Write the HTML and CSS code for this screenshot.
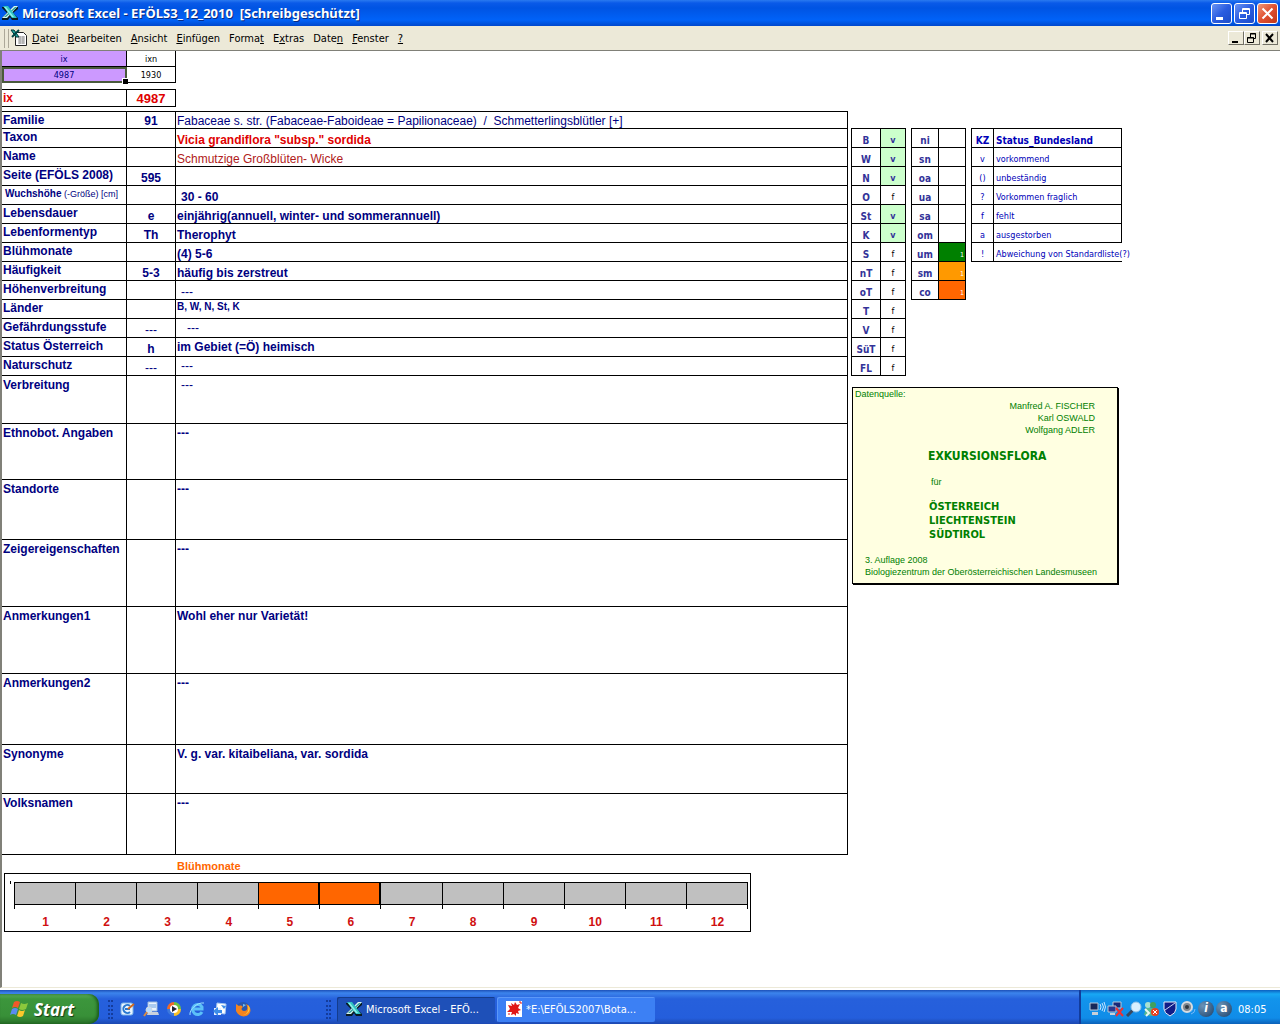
FILE: index.html
```
<!DOCTYPE html>
<html lang="de">
<head>
<meta charset="UTF-8">
<meta name="viewport" content="width=device-width, initial-scale=1.0">
<title>Microsoft Excel - EFÖLS3_12_2010</title>
<link rel="stylesheet" href="styles.css">
</head>
<body>

<!-- shared icons -->
<svg class="defs" width="0" height="0">
    <symbol id="excel" viewBox="0 0 16 16">
        <path d="M0 2h6l3 3 3-3h4v2l-5 4 5 5v2h-6l-2-3-2 3H0v-2l5-5-5-5z" fill="#0a1a20"/>
        <path d="M12 1h4L5 13H0z" fill="#d8f4f0"/>
        <path d="M13 2h2L4 12H2z" fill="#2a9c9c"/>
        <path d="M1 1h5l9 12h-5z" fill="#2fc4c4"/>
        <path d="M2 2h2l8 10h-2z" fill="#8ff0e8"/>
    </symbol>
</svg>

<header class="titlebar">
    <svg class="app-icon" width="16" height="16"><use href="#excel"/></svg>
    <h1>Microsoft Excel - EFÖLS3_12_2010&nbsp; [Schreibgeschützt]</h1>
    <div class="window-buttons">
        <button type="button" aria-label="Minimieren"><svg width="19" height="19"><path d="M4 13h7v3H4z" fill="#fff"/></svg></button>
        <button type="button" aria-label="Wiederherstellen"><svg width="19" height="19" fill="none" stroke="#fff"><path d="M7.500 8V4.500h7v6H12M7 5.500h8M4.500 8.500h7v6h-7zM4 9.500h8"/></svg></button>
        <button type="button" class="close" aria-label="Schließen"><svg width="19" height="19"><path d="M4.500 4.500l10 10M14.500 4.500l-10 10" stroke="#fff" stroke-width="2"/></svg></button>
    </div>
</header>

<nav class="menubar">
    <span class="grip"></span>
    <svg class="doc-icon" width="18" height="18">
        <path d="M5.500 3.500h8l3 3v10h-11z" fill="#fff" stroke="#222"/>
        <path d="M8 8h7M8 10h7M8 12h7M8 14h7M10 7v8M13 7v8" stroke="#999"/>
        <path d="M1 1h3l5 7H6z" fill="#1fa8a0" stroke="#033"/>
        <path d="M9 1L2 8" stroke="#044" stroke-width="2"/>
    </svg>
    <button type="button"><u>D</u>atei</button>
    <button type="button"><u>B</u>earbeiten</button>
    <button type="button"><u>A</u>nsicht</button>
    <button type="button"><u>E</u>infügen</button>
    <button type="button">Forma<u>t</u></button>
    <button type="button">E<u>x</u>tras</button>
    <button type="button">Date<u>n</u></button>
    <button type="button"><u>F</u>enster</button>
    <button type="button"><u>?</u></button>
    <div class="doc-buttons">
        <button type="button" aria-label="Mappe minimieren"><svg width="13" height="12"><path d="M3 9h6v2H3z"/></svg></button>
        <button type="button" aria-label="Mappe wiederherstellen"><svg width="13" height="12" fill="none" stroke="#000"><path d="M5.500 5V1.500h5v5H9M5 2h6M2.500 5.500h6v5h-6zM2 6h7"/></svg></button>
        <button type="button" class="doc-close" aria-label="Mappe schließen"><svg width="13" height="12"><path d="M3 2l7 8M10 2l-7 8" stroke="#000" stroke-width="2"/></svg></button>
    </div>
</nav>

<main class="sheet">
    <section class="record">
        <table class="index">
            <tr><td class="key">ix</td><td>ixn</td></tr>
            <tr><td class="key selected">4987</td><td>1930</td></tr>
        </table>

        <table class="current">
            <tr><th>ix</th><td>4987</td></tr>
        </table>

        <table class="fields">
            <tr class="first"><th>Familie</th><td>91</td><td class="plain">Fabaceae s. str. (Fabaceae-Faboideae = Papilionaceae)&nbsp; /&nbsp; Schmetterlingsblütler [+]</td></tr>
            <tr><th>Taxon</th><td></td><td class="taxon">Vicia grandiflora "subsp." sordida</td></tr>
            <tr><th>Name</th><td></td><td class="name">Schmutzige Großblüten- Wicke</td></tr>
            <tr><th>Seite (EFÖLS 2008)</th><td>595</td><td></td></tr>
            <tr><th class="small"><b>Wuchshöhe</b> (-Größe) [cm]</th><td></td><td class="indent">30 - 60</td></tr>
            <tr><th>Lebensdauer</th><td>e</td><td>einjährig(annuell, winter- und sommerannuell)</td></tr>
            <tr><th>Lebenformentyp</th><td>Th</td><td>Therophyt</td></tr>
            <tr><th>Blühmonate</th><td></td><td>(4) 5-6</td></tr>
            <tr><th>Häufigkeit</th><td>5-3</td><td>häufig bis zerstreut</td></tr>
            <tr><th>Höhenverbreitung</th><td></td><td class="indent plain">---</td></tr>
            <tr><th>Länder</th><td></td><td class="states-list">B, W, N, St, K</td></tr>
            <tr><th>Gefährdungsstufe</th><td class="plain">---</td><td class="indent-more plain middle">---</td></tr>
            <tr><th>Status Österreich</th><td>h</td><td class="middle">im Gebiet (=Ö) heimisch</td></tr>
            <tr><th>Naturschutz</th><td class="plain">---</td><td class="indent plain middle">---</td></tr>
            <tr class="tall verbreitung"><th>Verbreitung</th><td></td><td class="indent plain">---</td></tr>
            <tr class="tall ethnobotanik"><th>Ethnobot. Angaben</th><td></td><td>---</td></tr>
            <tr class="tall standorte"><th>Standorte</th><td></td><td>---</td></tr>
            <tr class="tall anmerkung"><th>Zeigereigenschaften</th><td></td><td>---</td></tr>
            <tr class="tall anmerkung"><th>Anmerkungen1</th><td></td><td>Wohl eher nur Varietät!</td></tr>
            <tr class="tall anmerkung2"><th>Anmerkungen2</th><td></td><td>---</td></tr>
            <tr class="tall synonyme"><th>Synonyme</th><td></td><td>V. g. var. kitaibeliana, var. sordida</td></tr>
            <tr class="tall volksnamen"><th>Volksnamen</th><td></td><td>---</td></tr>
        </table>

        <h2>Blühmonate</h2>
        <div class="chart">
            <ol>
                <li><div class="tick"><div class="bar"></div></div>1</li>
                <li><div class="tick"><div class="bar"></div></div>2</li>
                <li><div class="tick"><div class="bar"></div></div>3</li>
                <li><div class="tick"><div class="bar"></div></div>4</li>
                <li class="bloom"><div class="tick"><div class="bar"></div></div>5</li>
                <li class="bloom"><div class="tick"><div class="bar"></div></div>6</li>
                <li><div class="tick"><div class="bar"></div></div>7</li>
                <li><div class="tick"><div class="bar"></div></div>8</li>
                <li><div class="tick"><div class="bar"></div></div>9</li>
                <li><div class="tick"><div class="bar"></div></div>10</li>
                <li><div class="tick"><div class="bar"></div></div>11</li>
                <li><div class="tick"><div class="bar"></div></div>12</li>
            </ol>
        </div>
    </section>

    <aside>
        <div class="lists">
            <table class="states">
                <tr><th>B</th><td class="present">v</td></tr>
                <tr><th>W</th><td class="present">v</td></tr>
                <tr><th>N</th><td class="present">v</td></tr>
                <tr><th>O</th><td>f</td></tr>
                <tr><th>St</th><td class="present">v</td></tr>
                <tr><th>K</th><td class="present">v</td></tr>
                <tr><th>S</th><td>f</td></tr>
                <tr><th>nT</th><td>f</td></tr>
                <tr><th>oT</th><td>f</td></tr>
                <tr><th>T</th><td>f</td></tr>
                <tr><th>V</th><td>f</td></tr>
                <tr><th>SüT</th><td>f</td></tr>
                <tr><th>FL</th><td>f</td></tr>
            </table>

            <table class="levels">
                <tr><th>ni</th><td></td></tr>
                <tr><th>sn</th><td></td></tr>
                <tr><th>oa</th><td></td></tr>
                <tr><th>ua</th><td></td></tr>
                <tr><th>sa</th><td></td></tr>
                <tr><th>om</th><td></td></tr>
                <tr><th>um</th><td class="um">1</td></tr>
                <tr><th>sm</th><td class="sm">1</td></tr>
                <tr><th>co</th><td class="co">1</td></tr>
            </table>

            <table class="legend">
                <tr><th>KZ</th><th>Status_Bundesland</th></tr>
                <tr><td>v</td><td>vorkommend</td></tr>
                <tr><td>()</td><td>unbeständig</td></tr>
                <tr><td>?</td><td>Vorkommen fraglich</td></tr>
                <tr><td>f</td><td>fehlt</td></tr>
                <tr><td>a</td><td>ausgestorben</td></tr>
                <tr><td>!</td><td class="open">Abweichung von Standardliste(?)</td></tr>
            </table>
        </div>

        <div class="source">
            <p>Datenquelle:</p>
            <p class="authors">Manfred A. FISCHER<br>Karl OSWALD<br>Wolfgang ADLER</p>
            <div class="book">
                <h3>EXKURSIONSFLORA</h3>
                <p>für</p>
                <h4>ÖSTERREICH<br>LIECHTENSTEIN<br>SÜDTIROL</h4>
            </div>
            <p class="edition">3. Auflage 2008<br>Biologiezentrum der Oberösterreichischen Landesmuseen</p>
        </div>
    </aside>
</main>

<footer class="taskbar">
    <button type="button" class="start">
        <svg width="20" height="20">
            <path d="M4 3q3-2 6 0L8 9Q5 7 2 9z" fill="#f0582a"/>
            <path d="M11 4q3 2 7 0l-2 6q-4 2-7 0z" fill="#8cc83c"/>
            <path d="M2 10q3-2 6 0l-2 6q-3-2-6 0z" fill="#5a8cf0"/>
            <path d="M9 11q3 2 6 0l-2 6q-3 2-6 0z" fill="#fbc82c"/>
        </svg>
        Start
    </button>
    <div class="quicklaunch">
        <span class="handle"></span>
        <svg width="16" height="16">
            <rect x="1" y="2" width="12" height="12" rx="2" fill="#e8f4ff" stroke="#7ab4e8"/>
            <path d="M10 5a4 4 0 1 0 0 6M5 8h5" fill="none" stroke="#2878d0" stroke-width="2"/>
            <path d="M8 8l6-5" stroke="#d06a20" stroke-width="2"/>
        </svg>
        <svg width="16" height="16">
            <path d="M5 1h9v9H5z" fill="#eaf4ff" stroke="#9ab8dc"/>
            <path d="M6 4h7M6 6h7" stroke="#68a0e0"/>
            <path d="M5 11h10l1 3H4z" fill="#c8d0dc"/>
            <circle cx="6" cy="9" r="3" fill="#b8dcff" stroke="#d0d8e0"/>
            <path d="M4 11l-3 4" stroke="#d88a40" stroke-width="2"/>
        </svg>
        <svg width="16" height="16">
            <circle cx="8" cy="8" r="7" fill="#3c78dc"/>
            <path d="M8 8V1a7 7 0 0 0-7 7z" fill="#f06828"/>
            <path d="M8 8V1a7 7 0 0 1 7 7z" fill="#6cc040"/>
            <path d="M8 8h7a7 7 0 0 1-7 7z" fill="#f8c028"/>
            <circle cx="8" cy="8" r="4" fill="#fff"/>
            <path d="M6 5l5 3-5 3z" fill="#223"/>
        </svg>
        <svg width="16" height="16" fill="none">
            <path d="M13 11a5 5 0 1 1 0-5v2H4" stroke="#5cc0f8" stroke-width="3"/>
            <path d="M1 14C0 9 8 1 15 2" stroke="#9ae0ff" stroke-width="1"/>
        </svg>
        <svg width="16" height="16">
            <path d="M5 2l9 1-1 10-9-1z" fill="#fff" stroke="#a8c8f0"/>
            <path d="M2 7h7v7H2z" fill="#e8f0ff"/>
            <path d="M1 10l5-4v3h4v3H6v3zM9 4l5 1-2 3z" fill="#3c8ce8"/>
        </svg>
        <svg width="16" height="16">
            <circle cx="8" cy="8" r="7" fill="#2858b0"/>
            <path d="M1 3l3 2c2-1 3 0 4 1-2 1-2 4 1 4 4 0 4-4 2-7 5 2 6 8 2 11-4 3-10 1-12-4z" fill="#f48420"/>
            <path d="M13 4c4 4 0 10-5 10 5-1 6-5 5-10z" fill="#ffd040"/>
            <path d="M8 3l3 1-3 2z" fill="#7ac0f0"/>
        </svg>
    </div>
    <div class="tasks">
        <span class="handle"></span>
        <button type="button" class="active"><svg width="16" height="16"><use href="#excel"/></svg>Microsoft Excel - EFÖ...</button>
        <button type="button">
            <svg width="16" height="16">
                <path d="M0 0h16v16H0z" fill="#fff"/>
                <path d="M2 4l4 1-1-3 3 2 1-3 2 3 3-1-2 4 3 2-3 1 1 3-3-1v3l-2-2-3 1 1-3-5 0 3-3z" fill="#e01818"/>
                <path d="M13 1h2v2M2 13h2" stroke="#e01818" fill="none"/>
            </svg>*E:\EFÖLS2007\Bota...</button>
    </div>
    <div class="tray">
        <svg width="18" height="16">
            <path d="M1 2h8v7H1z" fill="#182858" stroke="#b8c8d8"/>
            <path d="M3 11h6v3H3z" fill="#c8d0d8"/>
            <path d="M11 3q2 3 0 6M13 2q3 4 0 8M15 1q3 5 0 10" fill="none" stroke="#c8e4ff"/>
        </svg>
        <svg width="18" height="16">
            <path d="M6 1h8v6H6z" fill="#182878" stroke="#b8c8d8"/>
            <path d="M1 5h8v6H1z" fill="#283890" stroke="#b8c8d8"/>
            <path d="M3 12h5v2H3z" fill="#c8d0d8"/>
            <path d="M9 7l7 8M16 7l-7 8" stroke="#f03030" stroke-width="2"/>
        </svg>
        <svg width="18" height="16">
            <path d="M8 9l-6 6" stroke="#384860" stroke-width="3"/>
            <circle cx="11" cy="6" r="5" fill="#d8f0ff" stroke="#8ac0e8"/>
        </svg>
        <svg width="18" height="16">
            <circle cx="5" cy="4" r="3" fill="#a8e0d0"/>
            <circle cx="10" cy="4" r="3" fill="#40a060"/>
            <path d="M1 14l2-7h5l6 1-3 7z" fill="#58b890"/>
            <path d="M2 8l4 4-3 3" stroke="#e8f8f0" fill="none" stroke-width="2"/>
            <circle cx="12" cy="11" r="4" fill="#e84020"/>
            <path d="M10 9l4 4M14 9l-4 4" stroke="#fff"/>
        </svg>
        <svg width="18" height="16">
            <path d="M3 1h12v7q0 4-6 7-6-3-6-7z" fill="#101c88" stroke="#e8eef8"/>
            <path d="M4 9L14 2" stroke="#c8d4f0"/>
        </svg>
        <svg width="18" height="16">
            <circle cx="8" cy="6" r="5" fill="#808890" stroke="#d8dce0" stroke-width="2"/>
            <circle cx="8" cy="6" r="2" fill="#303840"/>
            <path d="M12 13q4-1 4-5M11 11q2-1 3-3" fill="none" stroke="#78b8f8"/>
        </svg>
        <span class="badge info">i</span>
        <span class="badge">a</span>
        <time>08:05</time>
    </div>
</footer>

</body>
</html>
```
FILE: styles.css
```
* {
    box-sizing: border-box;
}
body {
    margin: 0;
    min-height: 100vh;
    display: flex;
    flex-direction: column;
    background: #fff;
    font-family: "Liberation Sans", Arial, sans-serif;
    font-size: 12px;
    color: #000080;
}
h1, h2, h3, h4, p, ol {
    margin: 0;
    padding: 0;
}
button {
    margin: 0;
    padding: 0;
    border: none;
    background: none;
    font-family: "DejaVu Sans Condensed", Tahoma, sans-serif;
    font-size: 11px;
    color: #000;
}
svg {
    display: block;
    flex: none;
}
.defs {
    position: absolute;
}

/* title bar */
.titlebar {
    display: flex;
    align-items: center;
    height: 26px;
    padding: 0 2px;
    background: linear-gradient(#2a7af0, #0a5ae8 3px, #0054e3 8px, #0062f8 20px, #0048cc);
}
.titlebar h1 {
    flex: 1;
    margin-left: 4px;
    font-family: "Noto Sans", sans-serif;
    font-size: 13px;
    color: #fff;
    text-shadow: 1px 1px #0a2a80;
}
.window-buttons {
    display: flex;
    gap: 2px;
}
.window-buttons button {
    width: 21px;
    height: 21px;
    border: 1px solid #fff;
    border-radius: 3px;
    background: linear-gradient(135deg, #6a94f4, #2a5ce0 50%, #1c4cc8);
}
.window-buttons .close {
    background: linear-gradient(135deg, #f09878, #e05030 50%, #c03818);
}

/* menu bar */
.menubar {
    display: flex;
    align-items: center;
    height: 24px;
    padding: 0 2px 0 4px;
    background: #ece9d8;
}
.menubar button {
    margin-right: 9px;
}
.grip {
    width: 5px;
    height: 19px;
    border: solid #aca899;
    border-width: 0 1px;
}
.doc-icon {
    margin: 0 4px 0 1px;
}
.doc-buttons {
    display: flex;
    margin-left: auto;
}
.doc-buttons button {
    width: 16px;
    height: 14px;
    margin: 0;
    border: 1px solid;
    border-color: #fff #716f64 #716f64 #fff;
}
.doc-buttons .doc-close {
    margin-left: 2px;
}

/* sheet */
.sheet {
    flex: 1;
    display: grid;
    grid-template-columns: minmax(0, 846px) 1fr;
    margin-bottom: 2px;
    border: solid #808078;
    border-width: 1px 0 0 2px;
    border-bottom: 1px solid #ece9d8;
}
table {
    border-collapse: separate;
    border-spacing: 0;
    table-layout: fixed;
}
th, td {
    padding: 0 1px;
    border: solid #000;
    border-width: 0 1px 1px 0;
    white-space: nowrap;
}
.index, .current {
    width: 174px;
}
.index td {
    height: 16px;
    font-family: "DejaVu Sans Condensed", Tahoma, sans-serif;
    font-size: 9px;
    line-height: 14px;
    text-align: center;
    color: #000;
}
.index td:first-child, .current th {
    width: 125px;
}
.index .key {
    background: #cc99ff;
    color: #000080;
}
.index .selected {
    position: relative;
    outline: 2px solid #4a5a3c;
    outline-offset: -2px;
}
/* fill handle */
.index .selected::after {
    content: "";
    position: absolute;
    right: -2px;
    bottom: -2px;
    width: 5px;
    height: 5px;
    border: solid #fff;
    border-width: 1px 0 0 1px;
    background: #000;
}
.current {
    margin: 6px 0 4px;
    border-top: 1px solid #000;
}
.current th, .current td {
    height: 17px;
    line-height: 15px;
    text-align: center;
    font-weight: bold;
    color: #e00000;
}
.current td {
    font-size: 13px;
}
.current th {
    text-align: left;
}
.fields {
    width: 100%;
    border-top: 1px solid #000;
}
.fields th {
    width: 125px;
    text-align: left;
    vertical-align: top;
    line-height: 16px;
}
.fields th, .fields td {
    height: 19px;
}
.fields td {
    vertical-align: bottom;
    line-height: 14px;
    font-weight: bold;
}
.fields td:nth-child(2) {
    width: 49px;
    text-align: center;
}
.fields .first th, .fields .first td {
    height: 17px;
}
.fields .small {
    padding-left: 3px;
    font-size: 9px;
    font-weight: normal;
}
.fields .small b {
    font-size: 10px;
}
.fields .plain, .fields .name {
    font-weight: normal;
}
.fields .taxon {
    color: #e00000;
}
.fields .name {
    color: #b02020;
}
.fields .indent {
    padding-left: 5px;
}
.fields .indent-more {
    padding-left: 11px;
}
.fields .middle {
    vertical-align: middle;
}
.fields .states-list {
    vertical-align: top;
    font-size: 10px;
}
.fields .tall th, .fields .tall td {
    padding-top: 1px;
    vertical-align: top;
    line-height: 16px;
}
.fields .verbreitung td {
    height: 48px;
}
.fields .ethnobotanik td {
    height: 56px;
}
.fields .standorte td {
    height: 60px;
}
.fields .anmerkung td {
    height: 67px;
}
.fields .anmerkung2 td {
    height: 71px;
}
.fields .synonyme td {
    height: 49px;
}
.fields .volksnamen td {
    height: 61px;
}

/* month chart */
.record h2 {
    padding: 4px 0 0 175px;
    font-size: 11px;
    line-height: 14px;
    color: #ff6600;
}
.chart {
    position: relative;
    max-width: 747px;
    margin-left: 2px;
    padding: 8px 2px 0 9px;
    border: 1px solid #000;
}
/* stub of the value axis */
.chart::before {
    content: "";
    position: absolute;
    top: 7px;
    left: 5px;
    width: 1px;
    height: 3px;
    background: #000;
}
.chart ol {
    display: flex;
    border-left: 1px solid transparent;
    list-style: none;
}
.chart li {
    flex: 1;
    padding-bottom: 1px;
    text-align: center;
    font-weight: bold;
    line-height: 15px;
    color: #d01010;
}
.tick {
    height: 27px;
    margin-bottom: 6px;
    border-right: 1px solid #000;
}
.chart li:first-child .tick {
    margin-left: -1px;
    border-left: 1px solid #000;
}
.bar {
    height: 23px;
    border: solid #000;
    border-width: 1px 0;
    background: #c0c0c0;
}
.bloom .bar {
    border-right-width: 1px;
    background: #ff6600;
}

/* lists on the right */
aside {
    padding: 77px 0 0 3px;
}
.lists {
    display: flex;
    align-items: flex-start;
    gap: 5px;
}
.lists table {
    flex: none;
    border: solid #000;
    border-width: 1px 0 0 1px;
}
.lists th, .lists td {
    height: 19px;
    vertical-align: bottom;
    text-align: center;
    line-height: 13px;
    font-family: "DejaVu Sans Condensed", Tahoma, sans-serif;
    font-size: 9px;
}
.lists th {
    font-size: 10px;
    color: #333399;
}
.states {
    width: 55px;
}
.states th {
    width: 29px;
}
.states td {
    color: #000;
}
.states .present {
    background: #ccffcc;
    font-weight: bold;
    color: #333399;
}
.levels {
    width: 55px;
}
.levels th {
    width: 27px;
}
.lists .levels td {
    font-size: 7px;
    line-height: 11px;
    text-align: right;
    color: #fff;
}
.levels .um {
    background: #008000;
}
.levels .sm {
    background: #ff9900;
}
.levels .co {
    background: #ff6600;
}
.legend {
    width: 151px;
}
.legend th, .legend td {
    color: #0000b8;
}
.legend th:first-child {
    width: 22px;
}
.legend th:last-child, .legend td:last-child {
    padding-left: 2px;
    text-align: left;
}
.legend .open {
    border-right: none;
}

/* source box */
.source {
    width: 266px;
    margin: 11px 0 0 1px;
    padding: 0 2px 5px;
    border: 1px solid #000;
    box-shadow: 1px 1px #000;
    background: #ffffe1;
    font-size: 9px;
    line-height: 12px;
    color: #008000;
}
.authors {
    padding-right: 20px;
    text-align: right;
}
.book {
    padding: 12px 0 12px 73px;
}
.book h3 {
    font-family: "DejaVu Sans Condensed", Tahoma, sans-serif;
    font-size: 12px;
    line-height: 16px;
}
.book p {
    padding: 12px 3px;
}
.book h4 {
    padding-left: 1px;
    font-family: "DejaVu Sans Condensed", Tahoma, sans-serif;
    font-size: 11px;
    line-height: 14px;
}
.edition {
    padding-left: 10px;
}

/* task bar */
.taskbar {
    display: flex;
    height: 34px;
    background: linear-gradient(#1c50b8, #3c84ec 3px, #2660dc 9px, #245edc 28px, #1c48b0);
}
.start {
    display: flex;
    align-items: center;
    gap: 4px;
    width: 99px;
    height: 30px;
    margin-top: 4px;
    padding-left: 10px;
    border-radius: 0 10px 10px 0;
    background: linear-gradient(#5cac5c, #3c963c 5px, #389038 22px, #287028);
    box-shadow: inset -2px 0 3px #1c5c1c;
    font-family: "Open Sans", sans-serif;
    font-size: 17px;
    font-style: italic;
    font-weight: bold;
    color: #fff;
    text-shadow: 1px 1px 1px #143c14;
}
.quicklaunch {
    display: flex;
    align-items: center;
    gap: 7px;
    width: 227px;
    padding: 4px 0 0 9px;
}
.handle {
    width: 5px;
    height: 19px;
    border-left: 2px dotted #143c9c;
    border-right: 2px dotted #143c9c;
}
.tasks {
    flex: 1;
    display: flex;
    align-items: center;
    gap: 2px;
    padding-top: 4px;
}
.tasks .handle {
    margin-right: 4px;
}
.tasks button {
    display: flex;
    align-items: center;
    gap: 4px;
    width: 158px;
    height: 25px;
    padding-left: 9px;
    border-radius: 2px;
    background: #3c80f4;
    box-shadow: inset 1px 1px #5c98f8;
    color: #fff;
}
.tasks .active {
    background: #1e50b8;
    box-shadow: inset 1px 1px #143c8c;
}
.tray {
    display: flex;
    align-items: center;
    width: 201px;
    padding: 4px 0 0 8px;
    border-left: 2px solid #123c9c;
    background: linear-gradient(#0c60c0, #18a8f4 4px, #1294ec 9px, #108ce8 28px, #0c60b8);
    font-family: "DejaVu Sans Condensed", Tahoma, sans-serif;
    font-size: 11px;
    color: #fff;
}
.badge {
    width: 16px;
    height: 16px;
    margin: 0 1px;
    border-radius: 50%;
    background: radial-gradient(circle at 30% 30%, #6a94b8, #1c4068);
    font-size: 12px;
    font-weight: bold;
    line-height: 15px;
    text-align: center;
}
.info {
    font-style: italic;
}
.tray time {
    margin-left: 5px;
}
```
